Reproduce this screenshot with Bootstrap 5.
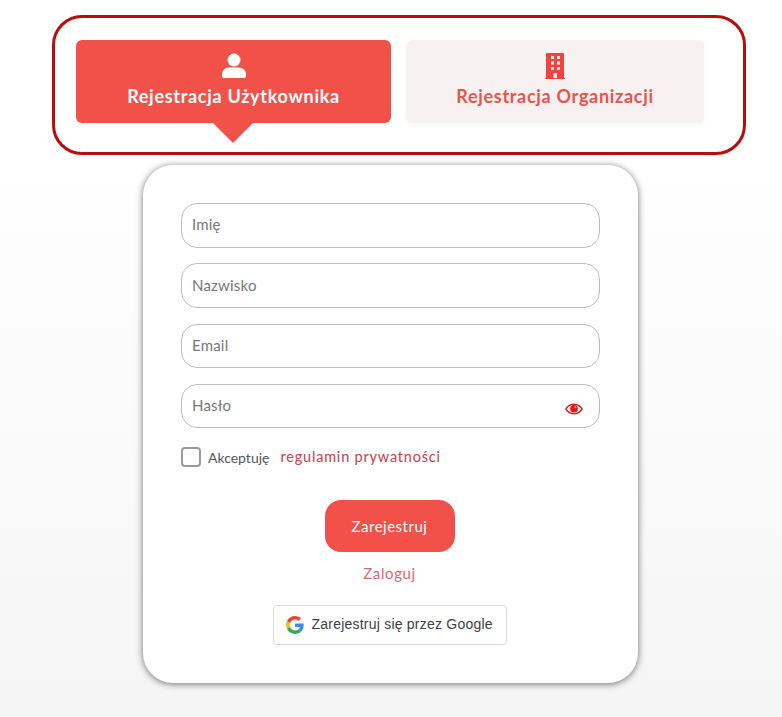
<!DOCTYPE html>
<html lang="pl">
<head>
  <meta charset="UTF-8" />
  <meta name="viewport" content="width=device-width, initial-scale=1" />
  <title>Rejestracja</title>
  <link href="https://cdn.jsdelivr.net/npm/bootstrap@5.3.3/dist/css/bootstrap.min.css" rel="stylesheet" />
  <style>
    body {
      background: #fff;
      font-family: "Lato", "Noto Sans", sans-serif;
      min-height: 717px;
      overflow: hidden;
    }

    .page-wrap {
      height: 717px;
      padding-top: 15px;
      background: linear-gradient(to bottom, #fff 0, #fff 150px, #f5f5f5 717px);
    }

    .tab-box {
      width: 694px;
      height: 140px;
      margin-left: 52px;
      padding: 22px 39px 0 21px;
      background: #fff;
      border: 3px solid #b90c0c;
      border-radius: 30px;
      gap: 15px;
    }

    .tab-item {
      height: 83px;
      border-radius: 6px;
      font-size: 18px;
      font-weight: 700;
      letter-spacing: .7px;
      text-decoration: none;
      padding-top: 13px;
      line-height: 22px;
    }

    .tab-item svg {
      display: block;
      margin-bottom: 6px;
    }

    .tab-user {
      width: 315px;
      background: #f2514a;
      color: #fff;
      position: relative;
    }

    .tab-user::after {
      content: "";
      position: absolute;
      left: 137px;
      top: 83px;
      border-left: 20px solid transparent;
      border-right: 20px solid transparent;
      border-top: 20px solid #f2514a;
    }

    .tab-org {
      width: 298px;
      background: #f7f2f1;
      color: #e9534e;
      box-shadow: 0 2px 6px rgba(0, 0, 0, .04);
    }

    .form-panel {
      width: 495px;
      height: 518px;
      margin: 10px 0 0 143px;
      padding: 38px;
      background: #fff;
      border-radius: 30px;
      box-shadow: 0 1px 7px rgba(0, 0, 0, .55);
    }

    .field-wrap {
      margin-bottom: 15.84px;
    }

    .form-control.field-input {
      height: 44.5px;
      padding: 0 10px 2px;
      border: 1px solid #bdbdbd;
      border-radius: 16px;
      font-size: 15px;
      letter-spacing: .2px;
      box-shadow: none;
    }

    .field-input::placeholder {
      color: #777;
    }

    .eye-icon {
      position: absolute;
      right: 17px;
      top: 19px;
    }

    .form-check-input.terms-box {
      width: 20px;
      height: 20px;
      margin: 0;
      border: 2px solid #9a9a9a;
      border-radius: 4px;
    }

    .terms-row {
      font-size: 14px;
      margin-top: 18.6px;
      height: 20px;
    }

    .terms-label {
      color: #555;
      margin: 0 11px 0 7px;
    }

    .terms-link {
      color: #c8404a;
      font-size: 14.5px;
      text-decoration: none;
      letter-spacing: .8px;
    }

    .btn.submit-btn {
      width: 130px;
      height: 52px;
      margin: 33px 2px 0 0;
      background: #f2514a;
      border: 0;
      border-radius: 16px;
      color: #fff;
      font-size: 15px;
      letter-spacing: .5px;
    }

    .login-link {
      display: block;
      margin: 10px 2px 0 0;
      color: #e2646f;
      font-size: 15px;
      text-decoration: none;
      letter-spacing: .6px;
    }

    .btn.google-btn {
      width: 234px;
      height: 40px;
      margin: 20px 2px 0 0;
      padding: 0 0 0 12px;
      gap: 8px;
      background: #fff;
      border: 1px solid #dadce0;
      border-radius: 4px;
      color: #3c4043;
      font-family: "Liberation Sans", Arial, sans-serif;
      font-size: 14px;
      letter-spacing: .22px;
    }
  </style>
</head>
<body>

<div class="page-wrap">
  <!-- Tabs -->
  <div class="tab-box d-flex">
    <a href="#" class="tab-item tab-user d-flex flex-column align-items-center">
      <svg width="24" height="26" viewBox="0 0 24 26" fill="#fff"><circle cx="12" cy="7" r="6.5"/><path d="M7 14.500h10c3.900 0 7 3 7 7v1.500c0 1.200-1 2-2 2H2c-1 0-2-.8-2-2v-1.500c0-4 3.100-7 7-7z"/></svg>
      Rejestracja Użytkownika
    </a>
    <a href="#" class="tab-item tab-org d-flex flex-column align-items-center">
      <svg width="20" height="26" viewBox="0 0 20 26" fill="#f0443e"><path fill-rule="evenodd" d="M2 0h16a1 1 0 0 1 1 1v24h1v1H0v-1h1V1a1 1 0 0 1 1-1zM6 3v3h3V3zM12 3v3h3V3zM6 8.500v3h3v-3zM12 8.500v3h3v-3zM6 14v3h3v-3zM12 14v3h3v-3zM8.500 20v5h3.500v-5z"/></svg>
      Rejestracja Organizacji
    </a>
  </div>

  <!-- Form -->
  <div class="form-panel text-center">
    <div class="field-wrap"><input type="text" class="form-control field-input" placeholder="Imię" /></div>
    <div class="field-wrap"><input type="text" class="form-control field-input" placeholder="Nazwisko" /></div>
    <div class="field-wrap"><input type="email" class="form-control field-input" placeholder="Email" /></div>
    <div class="field-wrap position-relative">
      <input type="password" class="form-control field-input" placeholder="Hasło" />
      <svg class="eye-icon" width="18" height="12" viewBox="0 0 18 12"><path fill="#e81212" d="M9 .5C5 .5 1.800 2.600 0 6c1.800 3.400 5 5.500 9 5.500s7.200-2.100 9-5.500C16.200 2.600 13 .5 9 .5zm0 9.600C6 10.100 3.300 8.600 1.700 6 3.300 3.400 6 1.900 9 1.900s5.700 1.500 7.300 4.100C14.700 8.600 12 10.100 9 10.100z"/><circle cx="9" cy="5.700" r="3.800" fill="#e81212"/><circle cx="10.300" cy="4.300" r="1" fill="#ff8a8a"/></svg>
    </div>
    <div class="terms-row d-flex align-items-center">
      <input type="checkbox" class="form-check-input terms-box" />
      <span class="terms-label">Akceptuję</span>
      <a href="#" class="terms-link">regulamin prywatności</a>
    </div>
    <button class="btn submit-btn">Zarejestruj</button>
    <a href="#" class="login-link">Zaloguj</a>
    <button class="btn google-btn d-inline-flex align-items-center">
      <svg width="18" height="18" viewBox="0 0 48 48"><path fill="#EA4335" d="M24 9.500c3.500 0 6.700 1.200 9.200 3.600l6.900-6.900C35.900 2.400 30.500 0 24 0 14.600 0 6.500 5.400 2.600 13.200l8 6.200C12.400 13.700 17.700 9.500 24 9.500z"/><path fill="#4285F4" d="M46.980 24.550c0-1.570-.15-3.090-.38-4.550H24v9.020h12.940c-.58 2.960-2.260 5.480-4.780 7.180l7.730 6c4.510-4.180 7.090-10.360 7.090-17.650z"/><path fill="#FBBC05" d="M10.530 28.590c-.48-1.450-.76-2.990-.76-4.590s.27-3.140.76-4.590l-7.980-6.190C.92 16.460 0 20.120 0 24c0 3.880.92 7.540 2.560 10.780l7.970-6.190z"/><path fill="#34A853" d="M24 48c6.480 0 11.930-2.130 15.890-5.810l-7.730-6c-2.150 1.450-4.920 2.300-8.160 2.300-6.260 0-11.570-4.220-13.470-9.910l-7.980 6.190C6.510 42.620 14.620 48 24 48z"/></svg>
      Zarejestruj się przez Google
    </button>
  </div>
</div>

<script src="https://cdn.jsdelivr.net/npm/bootstrap@5.3.3/dist/js/bootstrap.bundle.min.js"></script>
</body>
</html>
